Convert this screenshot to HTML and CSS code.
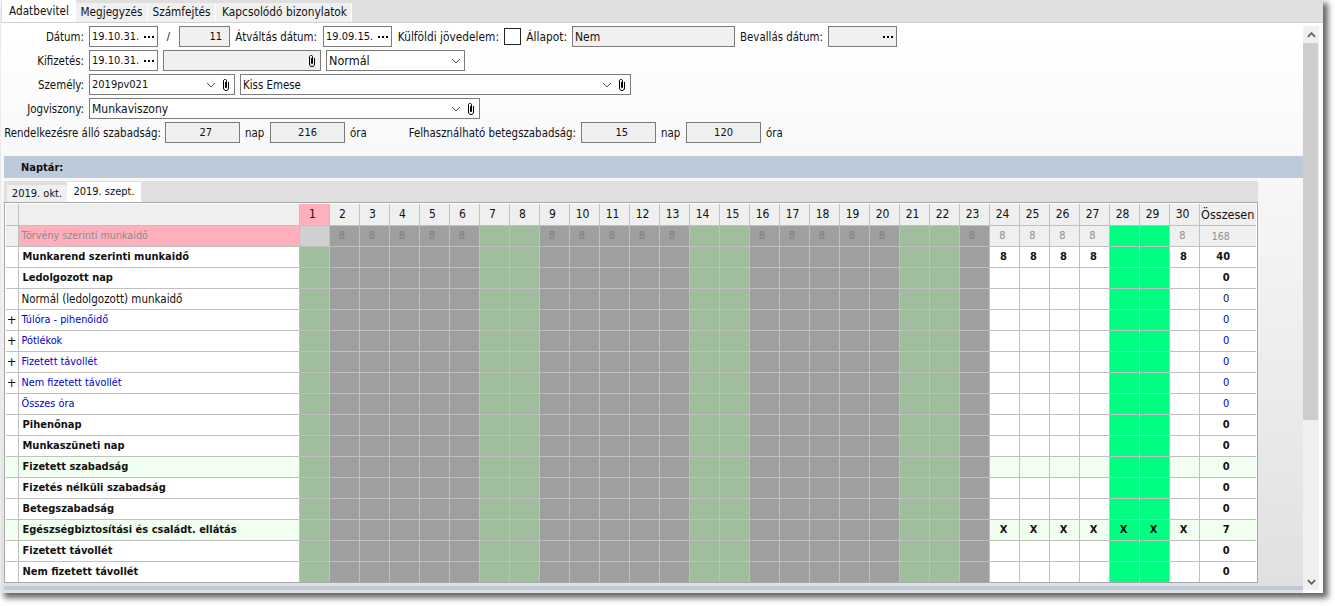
FILE: index.html
```html
<!DOCTYPE html>
<html lang="hu">
<head>
<meta charset="utf-8">
<title>Adatbevitel</title>
<link rel="stylesheet" href="styles.css">
</head>
<body>
<div class="window">
  <div class="tabs">
    <span class="tab active">Adatbevitel</span><span class="tab t2">Megjegyzés</span><span class="tab t3">Számfejtés</span><span class="tab t4">Kapcsolódó bizonylatok</span>
  </div>
  <div class="content">
    <div class="main">
      <div class="form">
        <div class="row">
          <label class="lbl l85">Dátum:</label>
          <span class="box w69"><span class="val">19.10.31.</span><svg class="dots" viewBox="0 0 10 2"><path d="M0 0h2v2H0zM4 0h2v2H4zM8 0h2v2H8z"/></svg></span>
          <span class="slash">/</span>
          <span class="box ro w51 right">11</span>
          <label class="lbl a1">Átváltás dátum:</label>
          <span class="box w69"><span class="val">19.09.15.</span><svg class="dots" viewBox="0 0 10 2"><path d="M0 0h2v2H0zM4 0h2v2H4zM8 0h2v2H8z"/></svg></span>
          <label class="lbl a2">Külföldi jövedelem:</label>
          <span class="check"></span>
          <label class="lbl a3">Állapot:</label>
          <span class="box ro w163"><span class="val big">Nem</span></span>
          <label class="lbl a4">Bevallás dátum:</label>
          <span class="box ro w69"><span class="val"></span><svg class="dots" viewBox="0 0 10 2"><path d="M0 0h2v2H0zM4 0h2v2H4zM8 0h2v2H8z"/></svg></span>
        </div>
        <div class="row">
          <label class="lbl l85">Kifizetés:</label>
          <span class="box w69"><span class="val">19.10.31.</span><svg class="dots" viewBox="0 0 10 2"><path d="M0 0h2v2H0zM4 0h2v2H4zM8 0h2v2H8z"/></svg></span>
          <span class="box ro w158 m5"><span class="val"></span><svg class="clip" viewBox="0 0 8 12"><path d="M3.500 3V8.500h1V1.500c0-.5-.5-1-1-1H3c-1 0-1.500.5-1.500 1.500V9c0 1.500 1 2.500 2.500 2.500S6.500 10.500 6.500 9V3"/></svg></span>
          <span class="box w139 m5"><span class="val bigger">Normál</span><svg class="chev" viewBox="0 0 10 6"><path d="M1 1l4 4 4-4"/></svg></span>
        </div>
        <div class="row">
          <label class="lbl l85">Személy:</label>
          <span class="box w146"><span class="val">2019pv021</span><svg class="chev" viewBox="0 0 10 6"><path d="M1 1l4 4 4-4"/></svg><svg class="clip" viewBox="0 0 8 12"><path d="M3.500 3V8.500h1V1.500c0-.5-.5-1-1-1H3c-1 0-1.500.5-1.500 1.500V9c0 1.500 1 2.500 2.500 2.500S6.500 10.500 6.500 9V3"/></svg></span>
          <span class="box w391 m5"><span class="val mid">Kiss Emese</span><svg class="chev" viewBox="0 0 10 6"><path d="M1 1l4 4 4-4"/></svg><svg class="clip" viewBox="0 0 8 12"><path d="M3.500 3V8.500h1V1.500c0-.5-.5-1-1-1H3c-1 0-1.500.5-1.500 1.500V9c0 1.500 1 2.500 2.500 2.500S6.500 10.500 6.500 9V3"/></svg></span>
        </div>
        <div class="row">
          <label class="lbl l85">Jogviszony:</label>
          <span class="box w391"><span class="val big">Munkaviszony</span><svg class="chev" viewBox="0 0 10 6"><path d="M1 1l4 4 4-4"/></svg><svg class="clip" viewBox="0 0 8 12"><path d="M3.500 3V8.500h1V1.500c0-.5-.5-1-1-1H3c-1 0-1.500.5-1.500 1.500V9c0 1.500 1 2.500 2.500 2.500S6.500 10.500 6.500 9V3"/></svg></span>
        </div>
        <div class="row">
          <label class="lbl s1">Rendelkezésre álló szabadság:</label>
          <span class="box ro w75 num">27</span>
          <span class="unit">nap</span>
          <span class="box ro w75 num">216</span>
          <span class="unit">óra</span>
          <label class="lbl s2">Felhasználható betegszabadság:</label>
          <span class="box ro w75 num">15</span>
          <span class="unit">nap</span>
          <span class="box ro w75 num">120</span>
          <span class="unit">óra</span>
        </div>
      </div>
      <div class="band">Naptár:</div>
      <div class="cal">
        <div class="caltabs"><span class="ctab">2019. okt.</span><span class="ctab on">2019. szept.</span></div>
        <div class="gridwrap">
        <table class="grid">
          <colgroup>
            <col class="c0"><col class="c1">
            <col class="we"><col class="wd"><col class="wd"><col class="wd"><col class="wd"><col class="wd">
            <col class="we"><col class="we"><col class="wd"><col class="wd"><col class="wd"><col class="wd"><col class="wd">
            <col class="we"><col class="we"><col class="wd"><col class="wd"><col class="wd"><col class="wd"><col class="wd">
            <col class="we"><col class="we"><col class="wd"><col class="f"><col class="f"><col class="f"><col class="f">
            <col class="gr"><col class="gr"><col class="f"><col class="tot">
          </colgroup>
          <tr class="hd">
            <td></td><td></td><td class="pk">1</td><td>2</td><td>3</td><td>4</td><td>5</td><td>6</td><td>7</td><td>8</td><td>9</td><td>10</td><td>11</td><td>12</td><td>13</td><td>14</td><td>15</td><td>16</td><td>17</td><td>18</td><td>19</td><td>20</td><td>21</td><td>22</td><td>23</td><td>24</td><td>25</td><td>26</td><td>27</td><td>28</td><td>29</td><td>30</td><td class="sum">Összesen</td>
          </tr>
          <tr class="law">
            <td class="hc"></td><td class="name pk">Törvény szerinti munkaidő</td><td class="lg"></td><td>8</td><td>8</td><td>8</td><td>8</td><td>8</td><td></td><td></td><td>8</td><td>8</td><td>8</td><td>8</td><td>8</td><td></td><td></td><td>8</td><td>8</td><td>8</td><td>8</td><td>8</td><td></td><td></td><td>8</td><td class="hc lite">8</td><td class="hc lite">8</td><td class="hc lite">8</td><td class="hc lite">8</td><td></td><td></td><td class="hc lite">8</td><td class="hc lite sm">168</td>
          </tr>
          <tr class="bold">
            <td></td><td class="name">Munkarend szerinti munkaidő</td><td></td><td></td><td></td><td></td><td></td><td></td><td></td><td></td><td></td><td></td><td></td><td></td><td></td><td></td><td></td><td></td><td></td><td></td><td></td><td></td><td></td><td></td><td></td><td>8</td><td>8</td><td>8</td><td>8</td><td></td><td></td><td>8</td><td class="t40">40</td>
          </tr>
          <tr class="bold">
            <td></td><td class="name">Ledolgozott nap</td><td></td><td></td><td></td><td></td><td></td><td></td><td></td><td></td><td></td><td></td><td></td><td></td><td></td><td></td><td></td><td></td><td></td><td></td><td></td><td></td><td></td><td></td><td></td><td></td><td></td><td></td><td></td><td></td><td></td><td></td><td>0</td>
          </tr>
          <tr class="plain">
            <td></td><td class="name">Normál (ledolgozott) munkaidő</td><td></td><td></td><td></td><td></td><td></td><td></td><td></td><td></td><td></td><td></td><td></td><td></td><td></td><td></td><td></td><td></td><td></td><td></td><td></td><td></td><td></td><td></td><td></td><td></td><td></td><td></td><td></td><td></td><td></td><td></td><td>0</td>
          </tr>
          <tr class="blue">
            <td class="plus">+</td><td class="name">Túlóra - pihenőidő</td><td></td><td></td><td></td><td></td><td></td><td></td><td></td><td></td><td></td><td></td><td></td><td></td><td></td><td></td><td></td><td></td><td></td><td></td><td></td><td></td><td></td><td></td><td></td><td></td><td></td><td></td><td></td><td></td><td></td><td></td><td>0</td>
          </tr>
          <tr class="blue">
            <td class="plus">+</td><td class="name">Pótlékok</td><td></td><td></td><td></td><td></td><td></td><td></td><td></td><td></td><td></td><td></td><td></td><td></td><td></td><td></td><td></td><td></td><td></td><td></td><td></td><td></td><td></td><td></td><td></td><td></td><td></td><td></td><td></td><td></td><td></td><td></td><td>0</td>
          </tr>
          <tr class="blue">
            <td class="plus">+</td><td class="name">Fizetett távollét</td><td></td><td></td><td></td><td></td><td></td><td></td><td></td><td></td><td></td><td></td><td></td><td></td><td></td><td></td><td></td><td></td><td></td><td></td><td></td><td></td><td></td><td></td><td></td><td></td><td></td><td></td><td></td><td></td><td></td><td></td><td>0</td>
          </tr>
          <tr class="blue">
            <td class="plus">+</td><td class="name">Nem fizetett távollét</td><td></td><td></td><td></td><td></td><td></td><td></td><td></td><td></td><td></td><td></td><td></td><td></td><td></td><td></td><td></td><td></td><td></td><td></td><td></td><td></td><td></td><td></td><td></td><td></td><td></td><td></td><td></td><td></td><td></td><td></td><td>0</td>
          </tr>
          <tr class="blue">
            <td></td><td class="name">Összes óra</td><td></td><td></td><td></td><td></td><td></td><td></td><td></td><td></td><td></td><td></td><td></td><td></td><td></td><td></td><td></td><td></td><td></td><td></td><td></td><td></td><td></td><td></td><td></td><td></td><td></td><td></td><td></td><td></td><td></td><td></td><td>0</td>
          </tr>
          <tr class="bold">
            <td></td><td class="name">Pihenőnap</td><td></td><td></td><td></td><td></td><td></td><td></td><td></td><td></td><td></td><td></td><td></td><td></td><td></td><td></td><td></td><td></td><td></td><td></td><td></td><td></td><td></td><td></td><td></td><td></td><td></td><td></td><td></td><td></td><td></td><td></td><td>0</td>
          </tr>
          <tr class="bold">
            <td></td><td class="name">Munkaszüneti nap</td><td></td><td></td><td></td><td></td><td></td><td></td><td></td><td></td><td></td><td></td><td></td><td></td><td></td><td></td><td></td><td></td><td></td><td></td><td></td><td></td><td></td><td></td><td></td><td></td><td></td><td></td><td></td><td></td><td></td><td></td><td>0</td>
          </tr>
          <tr class="bold">
            <td class="lt"></td><td class="name lt">Fizetett szabadság</td><td></td><td></td><td></td><td></td><td></td><td></td><td></td><td></td><td></td><td></td><td></td><td></td><td></td><td></td><td></td><td></td><td></td><td></td><td></td><td></td><td></td><td></td><td></td><td class="lt"></td><td class="lt"></td><td class="lt"></td><td class="lt"></td><td></td><td></td><td class="lt"></td><td class="lt">0</td>
          </tr>
          <tr class="bold">
            <td></td><td class="name">Fizetés nélküli szabadság</td><td></td><td></td><td></td><td></td><td></td><td></td><td></td><td></td><td></td><td></td><td></td><td></td><td></td><td></td><td></td><td></td><td></td><td></td><td></td><td></td><td></td><td></td><td></td><td></td><td></td><td></td><td></td><td></td><td></td><td></td><td>0</td>
          </tr>
          <tr class="bold">
            <td></td><td class="name">Betegszabadság</td><td></td><td></td><td></td><td></td><td></td><td></td><td></td><td></td><td></td><td></td><td></td><td></td><td></td><td></td><td></td><td></td><td></td><td></td><td></td><td></td><td></td><td></td><td></td><td></td><td></td><td></td><td></td><td></td><td></td><td></td><td>0</td>
          </tr>
          <tr class="bold">
            <td class="lt"></td><td class="name lt">Egészségbiztosítási és családt. ellátás</td><td></td><td></td><td></td><td></td><td></td><td></td><td></td><td></td><td></td><td></td><td></td><td></td><td></td><td></td><td></td><td></td><td></td><td></td><td></td><td></td><td></td><td></td><td></td><td class="lt">X</td><td class="lt">X</td><td class="lt">X</td><td class="lt">X</td><td>X</td><td>X</td><td class="lt">X</td><td class="lt">7</td>
          </tr>
          <tr class="bold">
            <td></td><td class="name">Fizetett távollét</td><td></td><td></td><td></td><td></td><td></td><td></td><td></td><td></td><td></td><td></td><td></td><td></td><td></td><td></td><td></td><td></td><td></td><td></td><td></td><td></td><td></td><td></td><td></td><td></td><td></td><td></td><td></td><td></td><td></td><td></td><td>0</td>
          </tr>
          <tr class="bold">
            <td></td><td class="name">Nem fizetett távollét</td><td></td><td></td><td></td><td></td><td></td><td></td><td></td><td></td><td></td><td></td><td></td><td></td><td></td><td></td><td></td><td></td><td></td><td></td><td></td><td></td><td></td><td></td><td></td><td></td><td></td><td></td><td></td><td></td><td></td><td></td><td>0</td>
          </tr>
        </table>
        </div>
      </div>
      <div class="endline"></div>
    </div>
    <div class="scrollbar">
      <span class="sb-btn"><svg viewBox="0 0 10 6"><path d="M1 5l4-4 4 4"/></svg></span>
      <span class="thumb"></span>
      <span class="sb-rest"></span>
      <span class="sb-btn"><svg viewBox="0 0 10 6"><path d="M1 1l4 4 4-4"/></svg></span>
    </div>
  </div>
</div>
</body>
</html>
```
FILE: styles.css
```css
* { box-sizing: border-box; }
html, body { margin: 0; padding: 0; background: #fff; }
body { width: 1335px; height: 606px; overflow: hidden; font: 11px "DejaVu Sans Condensed", "DejaVu Sans", sans-serif; color: #111; }
.window { width: 1322px; height: 593px; margin-left: 1px; background: #fff; box-shadow: 4px 4px 6px 1px #666; display: flex; flex-direction: column; }
.tabs { height: 23px; flex: none; background: #dfdfdf; border-bottom: 1px solid #d0d0d0; display: flex; align-items: flex-start; padding-left: 1px; font-size: 11.7px; }
.tab { height: 19px; line-height: 19px; background: #f0f0f0; border-right: 1px solid #fff; text-align: center; width: 72px; margin-top: 3px; white-space: nowrap; }
.tab.active { width: 74px; height: 22px; margin-top: 0; padding-top: 1px; line-height: 20px; background: #fff; border-right: 0; }
.tab.t3 { width: 68px; }
.tab.t4 { width: 136px; padding-left: 2px; font-size: 11.8px; }
.content { flex: 1; display: flex; min-height: 0; }
.main { width: 1302px; padding-left: 3px; display: flex; flex-direction: column; background: linear-gradient(#fff 3%, #e0e0e0 100%); }
.form { height: 133px; padding-top: 3px; display: flex; flex-direction: column; gap: 3px; flex: none; }
.row { display: flex; height: 21px; align-items: center; flex: none; }
.lbl { white-space: nowrap; text-align: right; font-size: 11.4px; padding-right: 5px; flex: none; }
.l85 { width: 85px; }
.box { height: 21px; border: 1px solid #7b7b7b; background: #fff; display: flex; align-items: center; padding: 0 2px; flex: none; white-space: nowrap; }
.box.ro { background: #f0f0f0; }
.val { flex: 1; }
.big { font-size: 12px; }
.bigger { font-size: 12.5px; }
.mid { font-size: 11.4px; }
.right { justify-content: flex-end; padding-right: 7px; }
.num { justify-content: flex-end; padding-right: 27px; }
.w69 { width: 69px; }
.w51 { width: 51px; }
.w163 { width: 163px; }
.w158 { width: 158px; }
.w139 { width: 139px; }
.w146 { width: 146px; }
.w391 { width: 391px; }
.w75 { width: 75px; }
.m5 { margin-left: 5px; }
.slash { width: 21px; text-align: center; flex: none; }
.a1 { width: 93px; padding-right: 6px; }
.a2 { width: 112px; font-size: 11.8px; }
.a3 { width: 51px; font-size: 11.8px; }
.a4 { width: 93px; }
.check { width: 17px; height: 17px; border: 1px solid #222; background: #fff; flex: none; }
.dots { width: 10px; height: 2px; margin-right: 1px; fill: #000; flex: none; }
.clip { width: 8px; height: 12px; margin-left: 5px; margin-right: 2px; fill: none; stroke: #000; stroke-width: 1; flex: none; }
.chev { width: 10px; height: 6px; fill: none; stroke: #555; stroke-width: 1; flex: none; margin-right: 1px; }
.s1 { width: 161px; padding-right: 4px; }
.unit { width: 30px; padding-left: 5px; flex: none; font-size: 11.4px; }
.s2 { width: 206px; }
.band { height: 22px; background: #bccad9; font-weight: bold; line-height: 23px; padding-left: 17px; flex: none; }
.cal { width: 1254px; margin-top: 3px; flex: none; }
.caltabs { height: 21px; display: flex; padding: 1px 0 0 3px; background: #dfdfdf; }
.ctab { height: 17px; margin-top: 3px; line-height: 18px; width: 60px; text-align: center; background: #f0f0f0; }
.ctab.on { width: 74px; height: 20px; margin-top: 0; line-height: 19px; background: #fff; }
.gridwrap { height: 381px; width: 1254px; border: 1px solid #a8a8a8; padding: 1px; background: #fff; }
.grid { border-collapse: collapse; table-layout: fixed; width: 1250px; }
.grid td { height: 21px; padding: 0; border: 1px solid #c0c0c0; text-align: center; overflow: hidden; white-space: nowrap; }
.grid tr td:first-child { border-left: 0; }
.grid tr td:last-child { border-right: 0; }
.grid .hd td { border-top: 0; }
.grid tr:last-child td { border-bottom: 0; }
.grid td:nth-child(n+3) { padding-right: 3px; }
.c0 { width: 12px; }
.c1 { width: 281px; }
.wd, .we, .f, .gr { width: 30px; }
.tot { width: 57px; }
.we { background: #a0bd9e; }
.wd { background: #9f9f9f; }
.f { background: #fff; }
.gr { background: #00ff80; }
.grid .hd td { background: #efefef; font-size: 12px; padding-right: 3px; }
.grid .hd td.pk { background: #ffb0bc; }
.grid .hd td.sum { font-size: 12.5px; padding-right: 0; }
.grid td.name { text-align: left; padding-left: 3px; }
.grid .bold td.name { padding-left: 4px; }
.grid td.pk { background: #ffb0bc; }
.law td { color: #7e7e7e; }
.grid .law td { padding-right: 4px; }
.grid .law td.name { color: #8c8c8c; font-size: 10.7px; padding-right: 0; }
.grid .law td.lite { color: #8f8f8f; padding-right: 3px; }
.grid .law td.sm { font-size: 10.5px; padding-right: 14px; }
.hc { background: #efefef; }
.lg { background: #d0d0d0; }
.bold td { font-weight: bold; }
.grid .bold td:nth-child(n+3) { padding-right: 1px; }
.grid .bold td:last-child { padding-right: 3px; }
.grid .bold td.t40 { padding-right: 9px; }
.plain td.name { font-size: 11.5px; }
.blue td { color: #00c; }
.blue td.name { font-size: 10.8px; }
.blue td.plus { color: #111; font-size: 13px; }
.lt { background: #f0fff0; }
.endline { height: 4px; background: #bccad9; margin-top: 3px; }
.scrollbar { width: 16px; margin-top: 3px; display: flex; flex-direction: column; background: #f0f0f0; height: 564px; }
.sb-btn { height: 17px; flex: none; background: #f0f0f0; display: flex; align-items: center; justify-content: center; }
.sb-btn svg { width: 9px; height: 6px; fill: none; stroke: #606060; stroke-width: 2; }
.thumb { height: 377px; width: 15px; background: #cdcdcd; flex: none; }
.sb-rest { flex: 1; }
```
